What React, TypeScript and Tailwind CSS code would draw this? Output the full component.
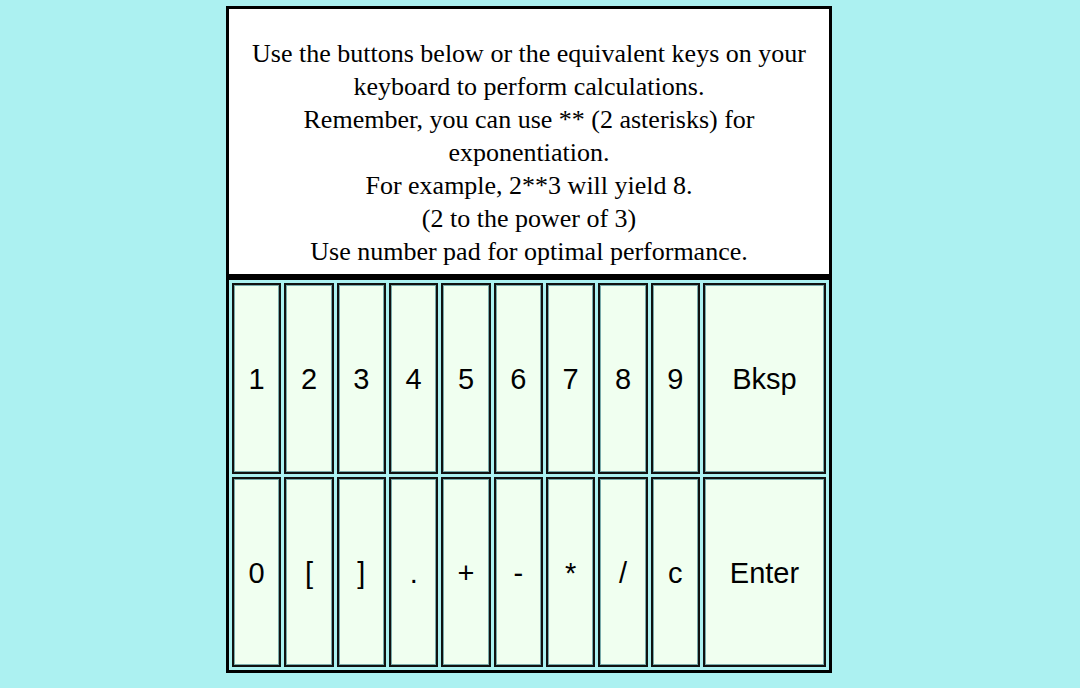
const ROWS = [
  ["1", "2", "3", "4", "5", "6", "7", "8", "9", "Bksp"],
  ["0", "[", "]", ".", "+", "-", "*", "/", "c", "Enter"],
];

const LINES = [
  "Use the buttons below or the equivalent keys on your",
  "keyboard to perform calculations.",
  "Remember, you can use ** (2 asterisks) for",
  "exponentiation.",
  "For example, 2**3 will yield 8.",
  "(2 to the power of 3)",
  "Use number pad for optimal performance.",
];

export default function App() {
  return (
    <div className="flex h-[688px] w-[1080px] bg-[#acf1f1] pl-[226px] pt-[6px]">
      <div className="flex h-[667px] w-[606px] flex-col border-[3px] border-black bg-white">
        <div className="border-b-[6px] border-black pb-[6px] pt-[28px] text-center font-['Liberation_Serif',serif] text-[26px] leading-[33px] text-black">
          {LINES.map((l) => (
            <div key={l} className="whitespace-nowrap">{l}</div>
          ))}
        </div>
        <div className="grid flex-1 grid-cols-[repeat(9,1fr)_123px] grid-rows-2 gap-[3px] bg-[#acf1f1] p-[3px]">
          {ROWS.flat().map((k) => (
            <button
              key={k}
              type="button"
              className="flex items-center justify-center border-2 border-[#111] bg-[#f0fff0] pt-[3px] font-['Liberation_Sans',Arial,sans-serif] text-[29px] text-black shadow-[inset_0_0_0_1px_#79aaaa]"
            >
              {k}
            </button>
          ))}
        </div>
      </div>
    </div>
  );
}
